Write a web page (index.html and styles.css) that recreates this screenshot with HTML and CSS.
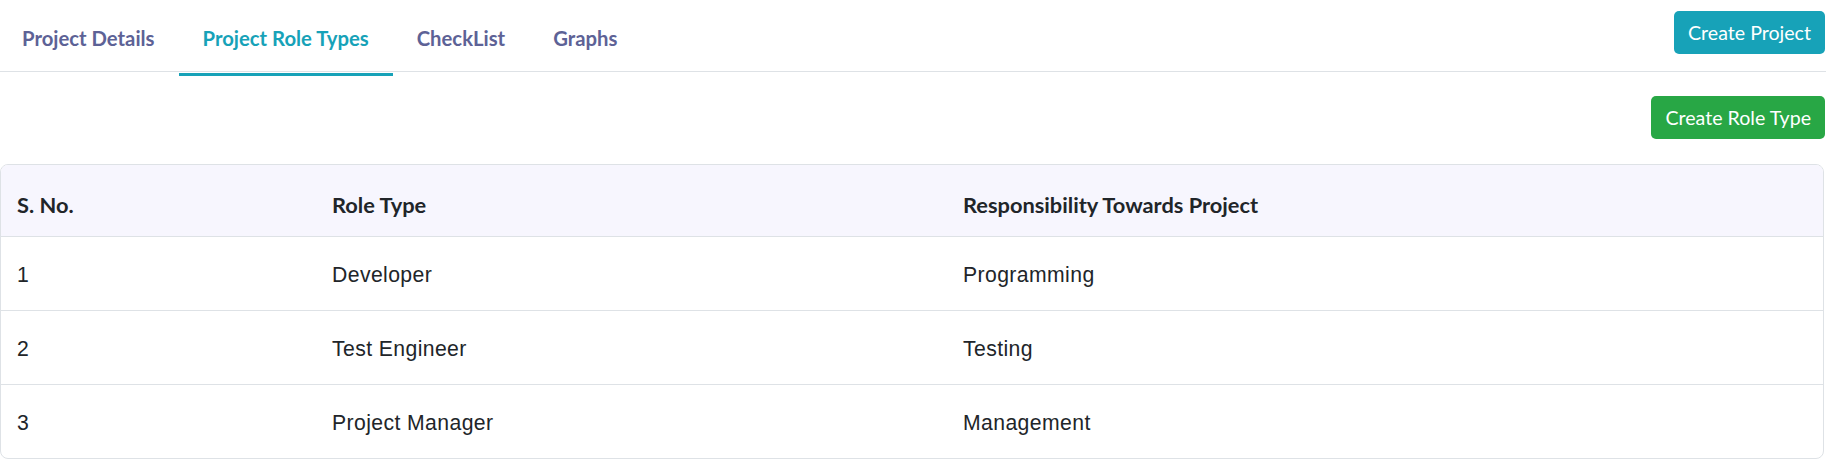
FILE: index.html
```html
<!DOCTYPE html>
<html lang="en">
<head>
    <meta charset="UTF-8">
    <meta name="viewport" content="width=device-width, initial-scale=1.0">
    <title>Project Role Types</title>
    <link rel="stylesheet" href="styles.css">
</head>
<body>

<!-- Tabs + main action -->
<div class="top-bar">
    <ul class="tabs">
        <li class="tab">Project Details</li>
        <li class="tab active">Project Role Types</li>
        <li class="tab">CheckList</li>
        <li class="tab">Graphs</li>
    </ul>
    <button class="btn btn-info create-project">Create Project</button>
</div>

<div class="toolbar">
    <button class="btn btn-success">Create Role Type</button>
</div>

<!-- Role types table -->
<div class="table-card">
    <table class="role-table">
        <thead>
            <tr>
                <th class="col-no">S. No.</th>
                <th class="col-role">Role Type</th>
                <th>Responsibility Towards Project</th>
            </tr>
        </thead>
        <tbody>
            <tr>
                <td>1</td>
                <td>Developer</td>
                <td>Programming</td>
            </tr>
            <tr>
                <td>2</td>
                <td>Test Engineer</td>
                <td>Testing</td>
            </tr>
            <tr>
                <td>3</td>
                <td>Project Manager</td>
                <td>Management</td>
            </tr>
        </tbody>
    </table>
</div>

</body>
</html>
```

FILE: styles.css
```css
body {
    margin: 0;
    font-family: Lato, "Open Sans", sans-serif;
    background-color: #fff;
    color: #212529;
}

/* Tabs bar */
.top-bar {
    display: flex;
    justify-content: space-between;
    align-items: flex-start;
    height: 71px;
    border-bottom: 1px solid #dee2e6;
}

.tabs {
    display: flex;
    list-style: none;
    margin: 0 0 0 -2px;
    padding: 0;
}

.tab {
    display: flex;
    align-items: center;
    height: 70px;
    padding: 3px 24px 0;
    border-bottom: 3px solid transparent;
    font-size: 20.3px;
    font-weight: 700;
    color: #5d6296;
    cursor: pointer;
}

.tab.active {
    color: #17a2b8;
    border-bottom-color: #17a2b8;
}

/* Buttons */
.btn {
    font-family: Lato, sans-serif;
    font-size: 19.6px;
    color: #fff;
    border: none;
    border-radius: 5px;
    height: 43px;
    padding: 0 14px;
    cursor: pointer;
}

.btn-info {
    background-color: #17a2b8;
}

.btn-success {
    background-color: #28a745;
}

.create-project {
    margin-top: 11px;
    margin-right: 1px;
}

.toolbar {
    display: flex;
    justify-content: flex-end;
    padding: 24px 1px 25px 0;
}

/* Table card */
.table-card {
    margin-right: 2px;
    border: 1px solid #dee2e6;
    border-radius: 8px;
    overflow: hidden;
}

.role-table {
    width: 100%;
    border-collapse: separate;
    border-spacing: 0;
    table-layout: fixed;
}

.role-table th,
.role-table td {
    text-align: left;
    padding: 0 0 0 16px;
    border-bottom: 1px solid #dee2e6;
    box-sizing: border-box;
}

.role-table th {
    height: 72px;
    padding-top: 7px;
    background-color: #f7f6fe;
    font-size: 21.8px;
    font-weight: 700;
}

.role-table td {
    height: 74px;
    padding-top: 2px;
    font-family: "Liberation Sans", Arial, sans-serif;
    font-size: 21.2px;
    letter-spacing: 0.4px;
    color: #212529;
}

.role-table tbody tr:last-child td {
    border-bottom: none;
    height: 73px;
}

.col-no {
    width: 315px;
}

.col-role {
    width: 631px;
}
```
